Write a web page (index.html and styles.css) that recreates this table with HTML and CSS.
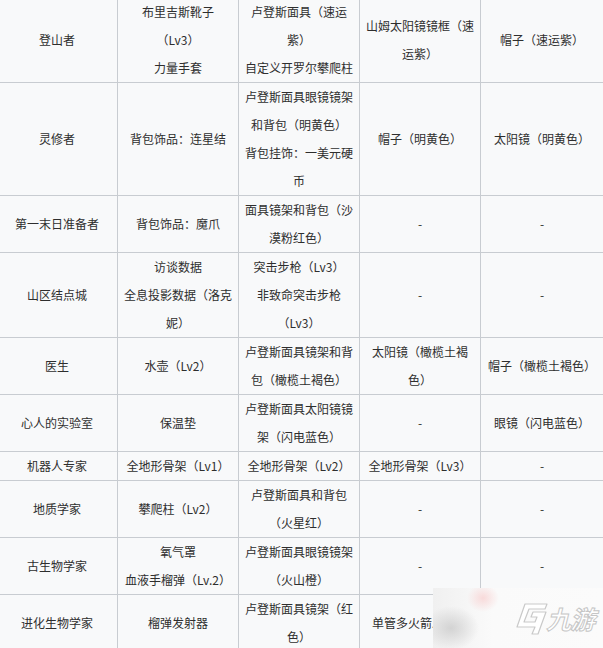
FILE: index.html
```html
<!DOCTYPE html>
<html lang="zh-CN">
<head>
<meta charset="utf-8">
<title>职业奖励</title>
<link rel="stylesheet" href="styles.css">
</head>
<body>
<div class="page">
<table class="rewards">
  <colgroup>
    <col class="c1"><col class="c2"><col class="c3"><col class="c4"><col class="c5">
  </colgroup>
  <tbody>
    <tr>
      <td>登山者</td>
      <td>布里吉斯靴子（Lv3）<br>力量手套</td>
      <td>卢登斯面具（速运紫）<br>自定义开罗尔攀爬柱</td>
      <td>山姆太阳镜镜框（速运紫）</td>
      <td>帽子（速运紫）</td>
    </tr>
    <tr>
      <td>灵修者</td>
      <td>背包饰品：连星结</td>
      <td>卢登斯面具眼镜镜架和背包（明黄色）<br>背包挂饰：一美元硬币</td>
      <td>帽子（明黄色）</td>
      <td>太阳镜（明黄色）</td>
    </tr>
    <tr>
      <td>第一末日准备者</td>
      <td>背包饰品：魔爪</td>
      <td>面具镜架和背包（沙漠粉红色）</td>
      <td>-</td>
      <td>-</td>
    </tr>
    <tr>
      <td>山区结点城</td>
      <td>访谈数据<br>全息投影数据（洛克妮）</td>
      <td>突击步枪（Lv3）<br>非致命突击步枪（Lv3）</td>
      <td>-</td>
      <td>-</td>
    </tr>
    <tr>
      <td>医生</td>
      <td>水壶（Lv2）</td>
      <td>卢登斯面具镜架和背包（橄榄土褐色）</td>
      <td>太阳镜（橄榄土褐色）</td>
      <td>帽子（橄榄土褐色）</td>
    </tr>
    <tr>
      <td>心人的实验室</td>
      <td>保温垫</td>
      <td>卢登斯面具太阳镜镜架（闪电蓝色）</td>
      <td>-</td>
      <td>眼镜（闪电蓝色）</td>
    </tr>
    <tr>
      <td>机器人专家</td>
      <td>全地形骨架（Lv1）</td>
      <td>全地形骨架（Lv2）</td>
      <td>全地形骨架（Lv3）</td>
      <td>-</td>
    </tr>
    <tr>
      <td>地质学家</td>
      <td>攀爬柱（Lv2）</td>
      <td>卢登斯面具和背包（火星红）</td>
      <td>-</td>
      <td>-</td>
    </tr>
    <tr>
      <td>古生物学家</td>
      <td>氧气罩<br>血液手榴弹（Lv.2）</td>
      <td>卢登斯面具眼镜镜架（火山橙）</td>
      <td>-</td>
      <td>-</td>
    </tr>
    <tr>
      <td>进化生物学家</td>
      <td>榴弹发射器</td>
      <td>卢登斯面具镜架（红色）</td>
      <td>单管多火箭发射器</td>
      <td>-</td>
    </tr>
  </tbody>
</table>

<div class="watermark">
  <svg class="wm-icon" width="34" height="32" viewBox="0 0 34 32" aria-hidden="true">
    <path d="M11 1 H33 L31 6 H15 L10 19 H21 L23 14 H17 L19 9 H32 L24 31 H18 L21 24 H3 Z" fill="#ffffff" stroke="#c9c9c9" stroke-width="1.2" stroke-linejoin="round"/>
  </svg>
  <span class="wm-text">九游</span>
</div>
</div>
</body>
</html>
```

FILE: styles.css
```css
html, body {
  margin: 0;
  padding: 0;
}

body {
  background: #f8f9fa;
  overflow: hidden;
  width: 603px;
  height: 648px;
}

.page {
  position: relative;
  width: 603px;
  height: 648px;
  overflow: hidden;
}

.rewards {
  border-collapse: collapse;
  table-layout: fixed;
  width: 607px;
  margin-left: -4px;
  margin-top: -3px;
  font-family: "Noto Sans CJK SC", "Microsoft YaHei", sans-serif;
  font-size: 12px;
  line-height: 28px;
  color: #2e2e2e;
  background: #f8f9fa;
}

.rewards .c1,
.rewards .c2,
.rewards .c3,
.rewards .c4 {
  width: 121px;
}

.rewards .c5 {
  width: 123px;
}

.rewards td {
  border: 1px solid #c8ccd1;
  padding: 0 5px;
  text-align: center;
  vertical-align: middle;
}

.watermark {
  position: absolute;
  left: 433px;
  top: 588px;
  width: 170px;
  height: 60px;
  background:
    radial-gradient(ellipse 28px 22px at 18px 40px, rgba(200, 200, 200, 0.75), rgba(220, 220, 220, 0) 100%),
    radial-gradient(ellipse 16px 14px at 50px 10px, rgba(248, 205, 205, 0.7), rgba(250, 230, 230, 0) 100%),
    linear-gradient(90deg, #f0f0f0 0%, #fafafa 35%, #fbfbfb 100%);
  display: flex;
  align-items: center;
  padding-left: 81px;
  box-sizing: border-box;
  gap: 1px;
  white-space: nowrap;
}

.wm-icon {
  display: block;
  flex: none;
  margin-top: 2px;
}

.wm-text {
  flex: none;
  font-family: "Noto Sans CJK SC", sans-serif;
  font-size: 25px;
  font-weight: 700;
  line-height: 30px;
  color: #ffffff;
  -webkit-text-stroke: 1px #c6c6c6;
  transform: skewX(-14deg);
  letter-spacing: -1px;
  white-space: nowrap;
}
```
